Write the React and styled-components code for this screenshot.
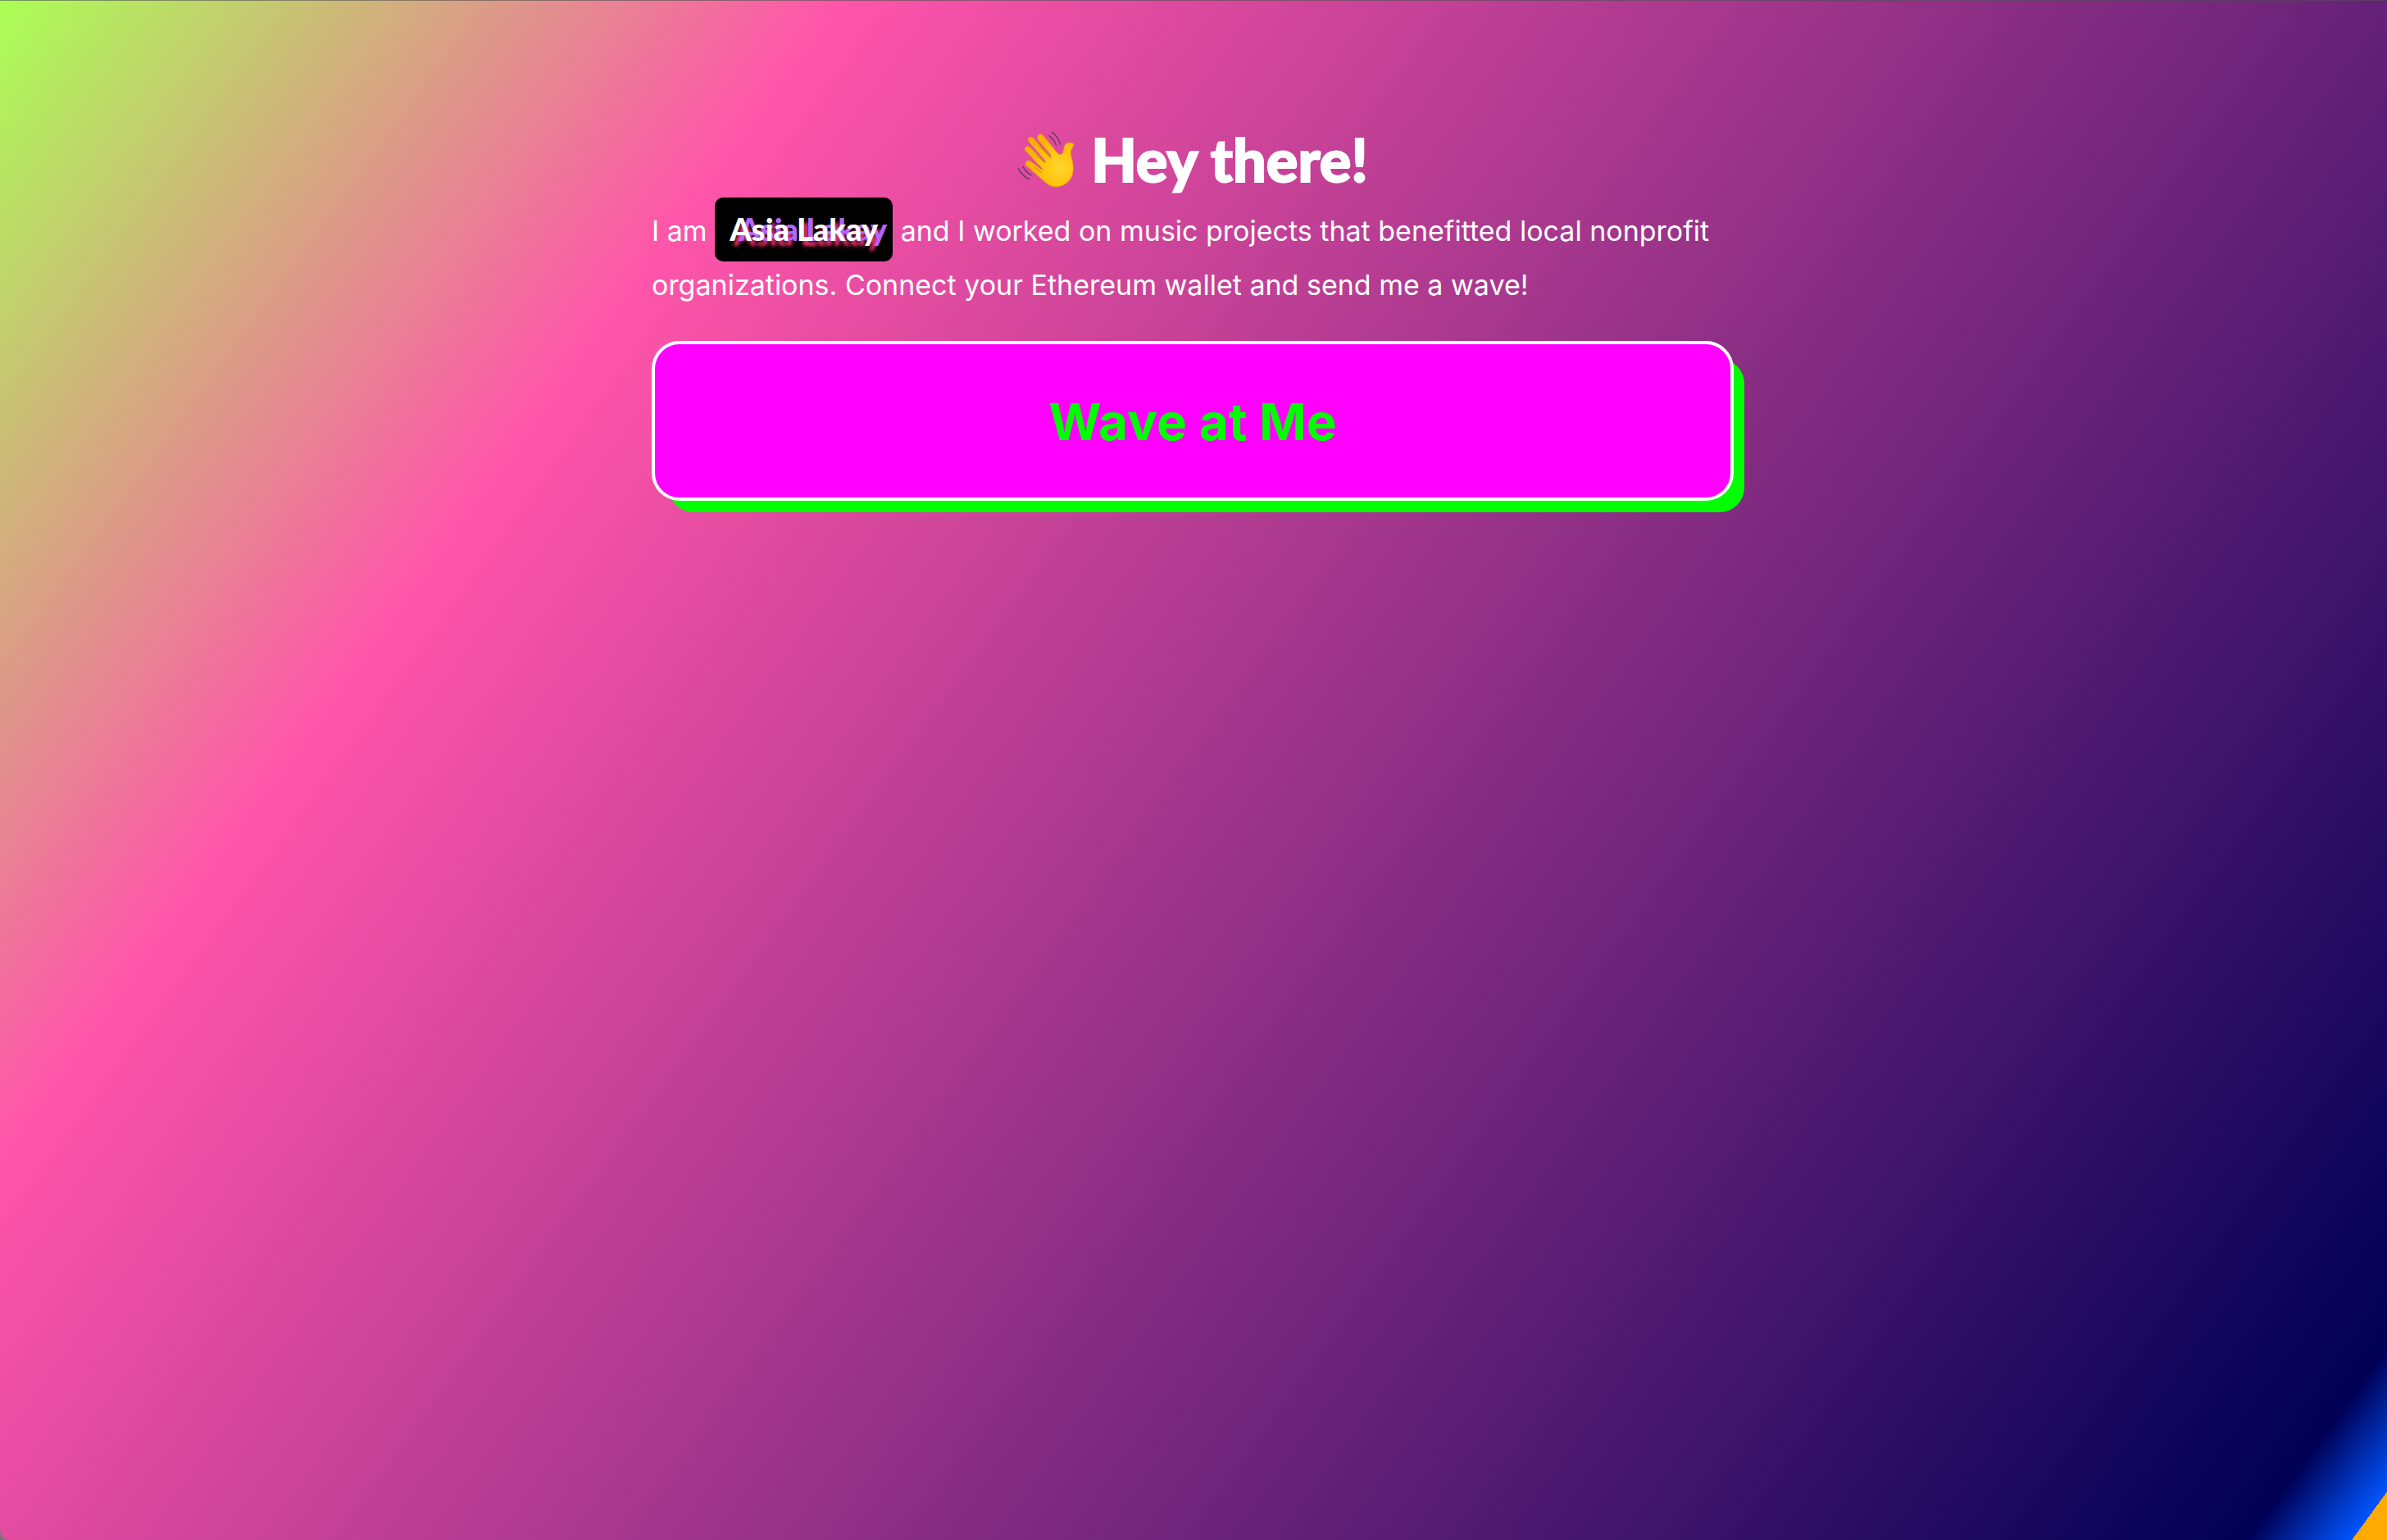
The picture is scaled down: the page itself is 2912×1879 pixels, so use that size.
import React from "react";
import styled, { createGlobalStyle } from "styled-components";

const GlobalStyle = createGlobalStyle`
  *, *::before, *::after { box-sizing: border-box; }
  body { margin: 0; background: #777; }
`;

const Page = styled.div`
  min-height: 100vh;
  display: flex;
  justify-content: center;
  padding: 149px 2px 64px 0;
  border-top: 1px solid rgba(80, 80, 80, 0.6);
  border-bottom-left-radius: 12px;
  color: #fff;
  font-family: Inter, "Liberation Sans", sans-serif;
  background: linear-gradient(
    126deg,
    #aaff55 0%,
    #ff55aa 24%,
    #6c247a 66%,
    #000055 96%,
    #0055ff 99%,
    #ffaa00 99%
  ) border-box;
`;

const Content = styled.main`
  width: 100%;
  max-width: 1320px;
  display: flex;
  flex-direction: column;
`;

const Heading = styled.h1`
  margin: 0;
  display: flex;
  justify-content: center;
  align-items: center;
  gap: 20px;
  font-family: Lato, sans-serif;
  font-size: 72px;
  line-height: 88px;
  font-weight: 900;
  -webkit-text-stroke: 2px #fff;
`;

const Hand = styled.svg`
  width: 70px;
  height: 70px;
`;

const Bio = styled.p`
  margin: 11px 0 0;
  font-size: 34px;
  line-height: 66px;
`;

const Name = styled.span`
  padding: 15px 18px 17px;
  border-radius: 10px;
  background: #000;
  font-family: Lato, sans-serif;
  font-size: 38px;
  line-height: 1;
  font-weight: 900;
  text-shadow: 11px 0 0 #b065ff, 5px 6px 4px #ff3572;
`;

const WaveButton = styled.button`
  margin-top: 35px;
  height: 195px;
  padding: 2px 24px 0;
  border: 4px solid #fff;
  border-radius: 34px;
  background: #f0f;
  box-shadow: 17px 18px 0 -4px #0f0;
  color: #0f0;
  font-family: inherit;
  font-size: 62px;
  font-weight: 700;
  cursor: pointer;
`;

function WavingHand() {
  return (
    <Hand viewBox="65 55 210 210" role="img" aria-label="Waving hand">
      <defs>
        <radialGradient id="skin" cx="0.72" cy="0.62" r="0.62">
          <stop offset="0" stopColor="#ffd52f" />
          <stop offset="0.55" stopColor="#ffc40f" />
          <stop offset="1" stopColor="#fbb009" />
        </radialGradient>
      </defs>
      <path
        fill="url(#skin)"
        stroke="#e8930c"
        strokeWidth="2"
        strokeLinejoin="round"
        d="M142 73c6-6 14-5 19 2l49 61c6 8 16 10 21 3 4-7 3-16 6-25 4-12 16-16 27-13 10 3 9 10 4 16-10 13-9 24-3 42 7 24 7 51-3 70-11 20-36 34-58 33-19-1-33-13-47-26l-57-50c-7-6-6-13-2-17 5-5 12-4 18 1l38 29c4 3 6 1 3-3L96 131c-5-6-4-11 0-15 5-4 11-3 16 1l52 53c4 3 7 1 4-3L108 97c-5-7-4-12 0-15 5-4 12-3 17 3l58 64c4 4 7 1 5-3L142 91c-4-6-5-13 0-18z"
      />
      <path
        fill="none"
        stroke="#cf7a08"
        strokeWidth="3"
        strokeLinecap="round"
        d="M128 190l26 20M136 146l27 25M146 112l42 45"
      />
      <path
        fill="none"
        stroke="#6b4068"
        strokeWidth="5"
        strokeLinecap="round"
        d="M192 62q22 15 31 44M182 75q17 13 25 33M69 195q12 25 39 39M86 189q11 20 30 30"
      />
    </Hand>
  );
}

export default function App() {
  return (
    <>
      <GlobalStyle />
      <Page>
        <Content>
          <Heading>
            <WavingHand />
            Hey there!
          </Heading>
          <Bio>
            I am <Name>Asia Lakay</Name> and I worked on music projects that
            benefitted local nonprofit organizations. Connect your Ethereum
            wallet and send me a wave!
          </Bio>
          <WaveButton type="button">Wave at Me</WaveButton>
        </Content>
      </Page>
    </>
  );
}
